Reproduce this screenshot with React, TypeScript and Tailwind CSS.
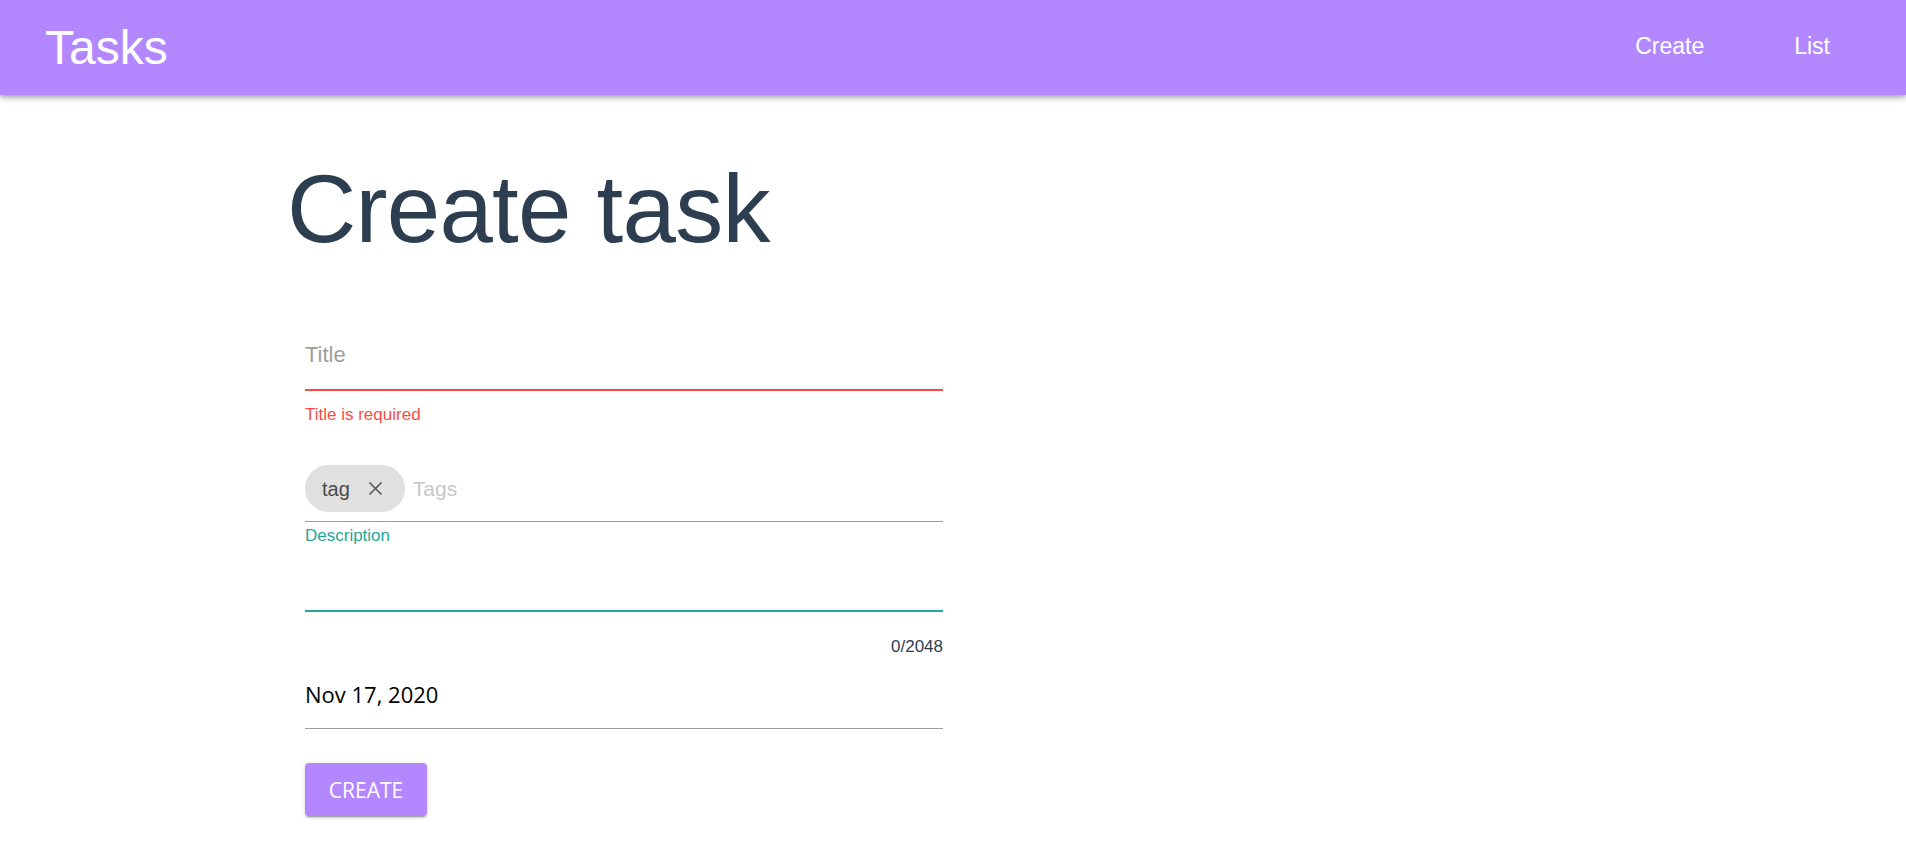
import React from 'react';

const sans = { fontFamily: '"Liberation Sans", Arial, sans-serif' };

export default function App() {
  return (
    <div className="min-h-screen bg-white font-['Liberation_Sans',Arial,sans-serif]">
      {/* App bar */}
      <header className="h-[95px] bg-[#b388ff] flex items-center justify-between pl-[45px] pr-[76px] shadow-[0_2px_4px_-1px_rgba(0,0,0,0.2),0_4px_5px_0_rgba(0,0,0,0.14),0_1px_10px_0_rgba(0,0,0,0.12)] relative z-10">
        <span className="text-white text-[48px] leading-none">Tasks</span>
        <nav className="flex gap-[90px] -mt-[3px]">
          <a className="text-white text-[23px] leading-none">Create</a>
          <a className="text-white text-[23px] leading-none">List</a>
        </nav>
      </header>

      <main className="pl-[287px] pt-[66px]">
        <h1 className="text-[#2c3e50] text-[96px] leading-none tracking-[-0.75px]" style={sans}>
          Create task
        </h1>

        <form className="ml-[18px] w-[638px] mt-[83px]">
          {/* Title */}
          <div className="border-b-2 border-[#fa4c45] pb-[19px]">
            <div className="text-[22px] leading-[30px] text-[#9e9e9e]">Title</div>
          </div>
          <div className="mt-[14px] text-[17px] leading-[20px] text-[#fa4c45]">Title is required</div>

          {/* Tags */}
          <div className="mt-[40px] border-b border-[#9e9e9e] pb-[9px] flex items-center gap-[8px]">
            <div className="h-[47px] rounded-full bg-[#e0e0e0] flex items-center pl-[17px] pr-[22px] gap-[18px]">
              <span className="text-[20px] text-[#4a4a4a]">tag</span>
              <svg width="15" height="15" viewBox="0 0 15 15" className="text-[#555]">
                <path d="M1.5 1.5 L13.5 13.5 M13.5 1.5 L1.5 13.5" stroke="currentColor" strokeWidth="1.6" />
              </svg>
            </div>
            <span className="text-[21px] text-[#c8c8c8]">Tags</span>
          </div>

          {/* Description */}
          <div className="mt-[4px] text-[17px] leading-[20px] text-[#26a69a]">Description</div>
          <div className="h-[66px] border-b-2 border-[#26a69a]" />
          <div className="mt-[25px] text-right text-[17px] leading-[20px] text-[#2c3e50]">0/2048</div>

          {/* Date */}
          <div className="mt-[22px] border-b border-[#9e9e9e] pb-[19px]">
            <div className="font-['Open_Sans',sans-serif] text-[22px] leading-[30px] text-black">Nov 17, 2020</div>
          </div>

          {/* Submit */}
          <button
            type="button"
            className="mt-[34px] w-[122px] h-[53px] pt-[3px] rounded-[4px] bg-[#b388ff] text-white font-['Open_Sans',sans-serif] text-[21px] shadow-[0_3px_1px_-2px_rgba(0,0,0,0.2),0_2px_2px_0_rgba(0,0,0,0.14),0_1px_5px_0_rgba(0,0,0,0.12)]"
          >
            CREATE
          </button>
        </form>
      </main>
    </div>
  );
}
